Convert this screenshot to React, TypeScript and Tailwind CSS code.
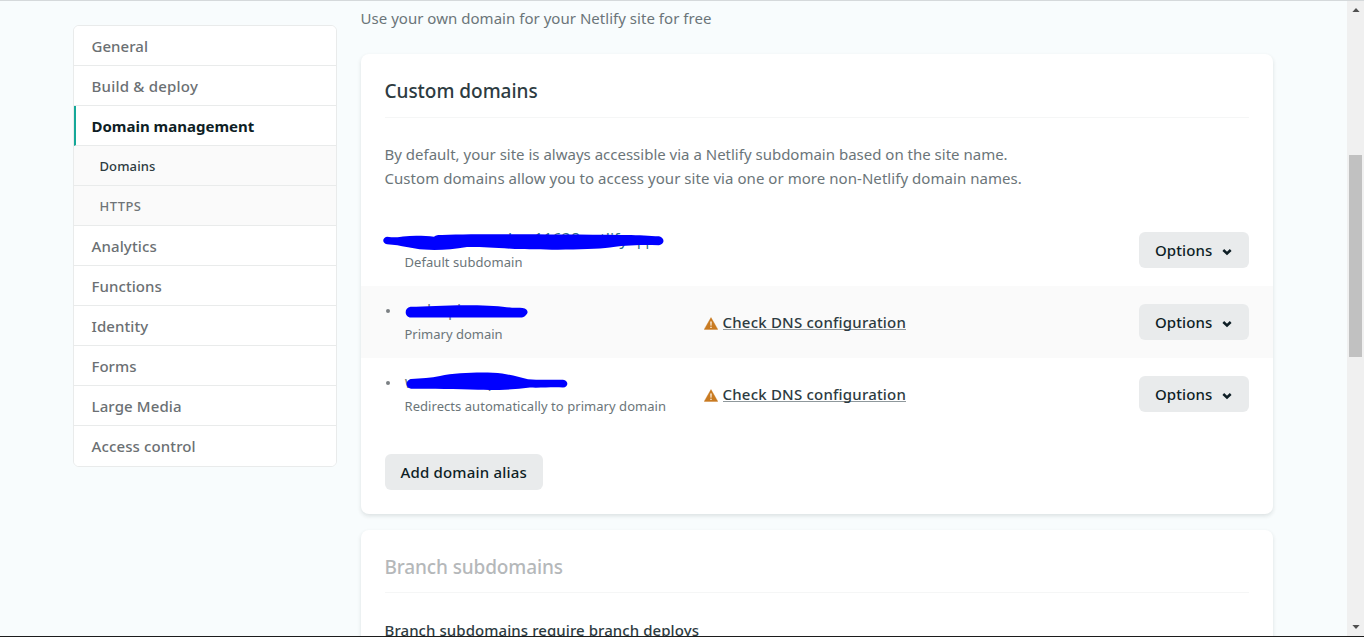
import React from "react";

type NavItem = { label: string; kind: "item" | "active" | "sub" | "subActive"; cls: string };

const nav: NavItem[] = [
  { label: "General", kind: "item", cls: "tracking-[0.05px]" },
  { label: "Build & deploy", kind: "item", cls: "tracking-[0.22px]" },
  { label: "Domain management", kind: "active", cls: "tracking-[0px]" },
  { label: "Domains", kind: "subActive", cls: "tracking-[0.12px]" },
  { label: "HTTPS", kind: "sub", cls: "tracking-[0.45px]" },
  { label: "Analytics", kind: "item", cls: "tracking-[0.12px]" },
  { label: "Functions", kind: "item", cls: "tracking-[0.08px]" },
  { label: "Identity", kind: "item", cls: "tracking-[0.08px]" },
  { label: "Forms", kind: "item", cls: "tracking-[0px]" },
  { label: "Large Media", kind: "item", cls: "tracking-[0.12px]" },
  { label: "Access control", kind: "item", cls: "tracking-[0.12px]" },
];

const navStyles = {
  item: "bg-white pl-[17.5px] text-[15px] font-medium text-[#6b7073]",
  active:
    "bg-white pl-[15.5px] text-[15px] font-bold text-[#0e1e25] border-l-2 border-l-[#15a899]",
  sub: "bg-[#fafafa] pt-[2px] pl-[25.5px] text-[13px] font-medium text-[#6f7477]",
  subActive: "bg-[#fafafa] pt-[2px] pl-[25.5px] text-[13px] font-medium text-[#2d3b41]",
};

function Sidebar() {
  return (
    <nav className="mt-[24px] ml-[73px] h-[442px] w-[264px] shrink-0 overflow-hidden rounded-md border border-[#e9ebeb] bg-white">
      {nav.map((n, i) => (
        <div
          key={n.label}
          className={`flex h-10 items-center border-b ${navStyles[n.kind]} ${n.cls} ${
            i < nav.length - 1 ? "border-b-[#e9ebeb]" : "border-b-white"
          }`}
        >
          <span className="pt-px">{n.label}</span>
        </div>
      ))}
    </nav>
  );
}

function OptionsButton() {
  return (
    <button className="flex h-9 w-[110px] items-center rounded-md bg-[#e9ebec] pl-4 text-[15px] font-medium tracking-[0.1px] text-[#0e1e25]">
      Options
      <svg className="mt-[3px] ml-[9.5px]" width="10" height="8" viewBox="0 0 10 8">
        <path d="M1.3 2 L5 5.5 L8.7 2" fill="none" stroke="#0e1e25" strokeWidth="2.5" />
      </svg>
    </button>
  );
}

function DnsLink() {
  return (
    <div className="flex items-center">
      <svg className="mt-[2px]" width="14" height="13" viewBox="0 0 14 13">
        <path d="M7 0.6 L13.8 12.4 H0.2 Z" fill="#c97b22" stroke="#c97b22" strokeWidth="0.4" strokeLinejoin="round" />
        <path d="M6.2 4.4 H7.8 L7.5 8.8 H6.5 Z M6.3 9.7 H7.7 V11 H6.3 Z" fill="#fbeedb" />
      </svg>
      <a className="ml-[4.5px] h-[16px] border-b border-[#8f989c] text-[15px] leading-[17px] font-medium tracking-[0.2px] text-[#2d3b41]">
        Check DNS configuration
      </a>
    </div>
  );
}

function SubdomainMark() {
  return (
    <svg className="absolute top-[16px] left-[21px]" width="284" height="24" viewBox="382 230 284 24">
      <g fill="#2f6f86" fontFamily="Noto Sans, sans-serif" fontSize="16">
        <text x="508" y="245">l</text>
        <text x="534" y="245">1163</text>
        <text x="571" y="245">8</text>
        <text x="600" y="244.8">tlify</text>
        <text x="637" y="245.2" fontSize="14">pp</text>
      </g>
      <path
        d="M387 236.8 C393 237.5 399 237.6 403 236.6 C414 235.2 426 236 434 236.8 C436 234.8 438 235 442 234.9 C485 233.9 560 234.5 620 235 C636 234.6 648 235.8 659 236.2 C665 238 665 244 659 245.2 C640 244.4 622 245.2 610 247.6 C590 250.4 540 249.8 515 249 C495 247.6 480 246.8 467 247 C452 249.6 438 250.4 424 249.6 C412 249 402 245.2 387 244.3 C382 243 382 238 387 236.8 Z"
        fill="#0000ff"
      />
    </svg>
  );
}

function PrimaryMark() {
  return (
    <svg className="absolute top-[15px] left-[43px]" width="125" height="22" viewBox="404 301 125 22">
      <g fill="#6b7b86" fontFamily="Noto Sans, sans-serif" fontSize="16">
        <text x="427" y="316">l</text>
        <text x="448" y="315.5">p</text>
        <text x="457" y="316">l</text>
      </g>
      <path
        d="M410.5 306.8 C425 306.6 445 305.4 465 305.2 C485 304.8 503 306.4 512 307.8 C516 307.8 519 307.8 522.5 307.9 C528 308.4 528.8 313 526 315 C524.4 317 523 317.5 520 317.6 H411 C404 317 404 307.6 410.5 306.8 Z"
        fill="#0000ff"
      />
    </svg>
  );
}

function AliasMark() {
  return (
    <svg className="absolute top-[12px] left-[43px]" width="165" height="24" viewBox="404 370 165 24">
      <g fill="#6b7b86" fontFamily="Noto Sans, sans-serif" fontSize="16">
        <text x="404.8" y="388">w</text>
        <text x="487.6" y="387.2">p</text>
      </g>
      <path
        d="M411 379 C421 378.6 431 377.8 440 376 C455 373 476 372.2 493 372.8 C508 373.6 517 376.6 528 379.2 C540 380.4 553 379.6 563 379.7 C569 380.6 568.6 387 563 387.6 C553 386.8 543 388 530 387.6 C513 389.8 495 390.2 478 389.8 C458 389.2 430 388.8 411 388.8 C405 387.6 405 380.6 411 379 Z"
        fill="#0000ff"
      />
    </svg>
  );
}

type RowProps = {
  caption: string;
  captionCls: string;
  mark: React.ReactNode;
  bullet?: boolean;
  shaded?: boolean;
};

function DomainRow({ caption, captionCls, mark, bullet, shaded }: RowProps) {
  return (
    <div className={`relative flex h-[72px] items-center pr-6 ${shaded ? "bg-[#fafafa]" : "bg-white"}`}>
      {mark}
      <div className="w-[343px] shrink-0">
        <div className="flex h-[26px] items-center pl-[25px]">
          {bullet && <span className="-mt-1 size-1 rounded-full bg-[#7b8083]" />}
        </div>
        <div className={`pb-[2px] pl-[43.5px] text-[13px] leading-[16px] text-[#6b7579] ${captionCls}`}>{caption}</div>
      </div>
      {bullet && <DnsLink />}
      <div className="ml-auto">
        <OptionsButton />
      </div>
    </div>
  );
}

const cardShadow = "shadow-[0_2px_4px_0_rgba(14,30,37,0.12)]";

function Scrollbar() {
  return (
    <div className="flex w-[17px] shrink-0 flex-col items-center justify-between bg-[#f0f0f0]">
      <svg className="mt-[6px]" width="8" height="6" viewBox="0 0 8 6">
        <path d="M0.4 5 L4 1 L7.6 5 Z" fill="#505050" />
      </svg>
      <div className="mb-[267px] mt-[142px] w-[13px] flex-1 bg-[#c1c1c1]" />
      <svg className="mb-[6px]" width="8" height="6" viewBox="0 0 8 6">
        <path d="M0.4 1 L4 5 L7.6 1 Z" fill="#505050" />
      </svg>
    </div>
  );
}

export default function App() {
  return (
    <div className="flex h-[637px] w-[1364px] overflow-hidden border-t border-b border-t-[#d5d9db] border-b-[#1c1c1c] bg-[#f8fcfd] font-['Noto_Sans',sans-serif]">
      <Sidebar />
      <main className="ml-6 w-[912px] shrink-0">
        <p className="mt-[5px] -ml-[0.5px] text-[15px] leading-6 tracking-[0.03px] text-[#6b7579]">
          Use your own domain for your Netlify site for free
        </p>

        <section className={`mt-[24px] h-[460px] rounded-lg bg-white ${cardShadow}`}>
          <div className="mx-6 flex h-16 items-center border-b border-[#f5f6f6] pt-[11px]">
            <h2 className="-ml-[0.5px] text-[19px] font-medium tracking-[-0.03px] text-[#2d3b41]">Custom domains</h2>
          </div>
          <p className="mt-[24px] ml-[23.5px] text-[15px] leading-6 text-[#6b7579]">
            <span className="tracking-[0px]">
              By default, your site is always accessible via a Netlify subdomain based on the site name.
            </span>
            <br />
            <span className="tracking-[0.05px]">
              Custom domains allow you to access your site via one or more non-Netlify domain names.
            </span>
          </p>
          <div className="mt-[24px]">
            <DomainRow caption="Default subdomain" captionCls="tracking-[0.06px]" mark={<SubdomainMark />} />
            <DomainRow caption="Primary domain" captionCls="tracking-[0px]" mark={<PrimaryMark />} bullet shaded />
            <DomainRow
              caption="Redirects automatically to primary domain"
              captionCls="tracking-[0.05px]"
              mark={<AliasMark />}
              bullet
            />
          </div>
          <button className="mt-6 ml-6 flex h-9 w-[158px] items-center rounded-md bg-[#e9ebec] pl-[15.5px] text-[15px] font-medium tracking-[0.18px] text-[#0e1e25]">
            Add domain alias
          </button>
        </section>

        <section className={`mt-4 h-[300px] rounded-t-lg bg-white ${cardShadow}`}>
          <div className="mx-6 flex h-[63px] items-center border-b border-[#f5f6f6] pt-[13px]">
            <h2 className="-ml-[0.5px] text-[19px] font-medium tracking-[-0.13px] text-[#b5b8ba]">Branch subdomains</h2>
          </div>
          <p className="mt-[25px] ml-[23.5px] text-[15px] leading-6 font-medium tracking-[0.07px] text-[#2d3b41]">
            Branch subdomains require branch deploys
          </p>
        </section>
      </main>
      <div className="flex-1" />
      <Scrollbar />
    </div>
  );
}
